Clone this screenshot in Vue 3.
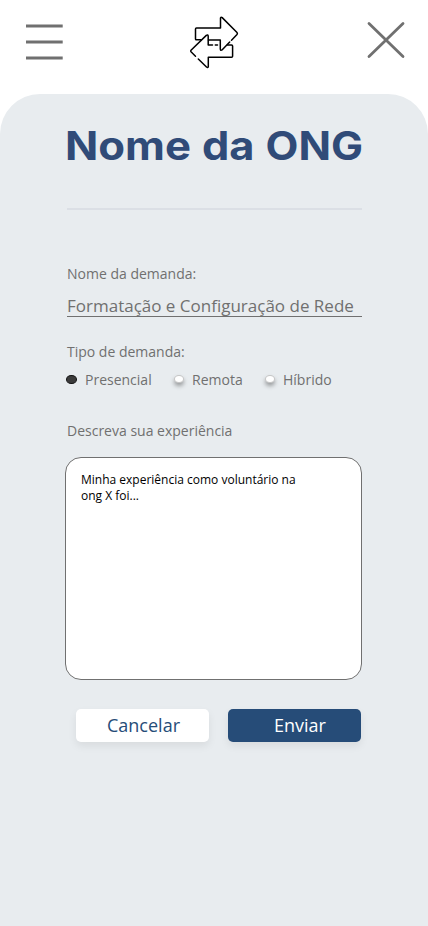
<script setup>
import { ref } from 'vue'

const types = ['Presencial', 'Remota', 'Híbrido']
const selected = ref('Presencial')
const demand = 'Formatação e Configuração de Rede'
</script>

<template>
  <div class="screen">
    <header class="topbar">
      <svg class="menu" width="38" height="36" viewBox="0 0 38 36">
        <path d="M0 2H36.700M0 18H36.700M0 34H36.700" />
      </svg>
      <svg class="logo" width="52" height="56" viewBox="188 14 52 56">
        <path d="M201 39.800H196.200Q195.500 39.800 195.500 39V29Q195.500 28 196.500 28H220.500V18Q221 16.500 222.200 17.600L237 32.500Q237.800 33.500 237 34.500L231.500 40.300M229.700 42L222 50Q220.500 51 220.300 49V40H208.500" />
        <path d="M227.500 45H231.500Q232.600 45 232.600 46V56.200Q232.600 57.200 231.500 57.200H208.300V66.500Q208 68.200 206.500 67L198.300 59M195.500 56.200L191 51.800Q190.300 51 191 50.200L206.300 35.400Q208 34.300 208.200 36V45H212.500M215.300 45H217.500" />
      </svg>
      <svg class="close" width="39" height="38" viewBox="0 0 39 38">
        <path d="M2 2.500L36 35.500M36 2.500L2 35.500" />
      </svg>
    </header>
    <main class="panel">
      <h1>
        <svg width="300" height="60" viewBox="0 0 300 60">
          <text x="0" y="44" textLength="126" lengthAdjust="spacingAndGlyphs">Nome</text>
          <text x="137" y="44" textLength="52.500" lengthAdjust="spacingAndGlyphs">da</text>
          <text x="200.500" y="44" textLength="97.500" lengthAdjust="spacingAndGlyphs">ONG</text>
        </svg>
      </h1>
      <hr />
      <p class="label name-label">Nome da demanda:</p>
      <div class="field">{{ demand }}</div>
      <p class="label type-label">Tipo de demanda:</p>
      <div class="types">
        <div v-for="t in types" :key="t" class="type" @click="selected = t">
          <i :class="{ on: selected === t }"></i><span>{{ t }}</span>
        </div>
      </div>
      <p class="label exp-label">Descreva sua experiência</p>
      <div class="box">Minha experiência como voluntário na<br />ong X foi...</div>
      <div class="actions">
        <button class="cancel">Cancelar</button>
        <button class="send">Enviar</button>
      </div>
    </main>
  </div>
</template>

<style>
body {
  margin: 0;
  background: #fff;
}
</style>

<style scoped>
.screen {
  width: 428px;
  height: 926px;
  display: flex;
  flex-direction: column;
  overflow: hidden;
  font-family: "Open Sans", sans-serif;
  color: #707070;
}
.topbar {
  height: 94px;
  flex: none;
  box-sizing: border-box;
  padding: 14px 22px 0 26px;
  display: flex;
  justify-content: space-between;
  align-items: flex-start;
}
svg {
  display: block;
  fill: none;
  overflow: visible;
}
.menu {
  margin-top: 10px;
  stroke: #707070;
  stroke-width: 3;
}
.logo {
  margin-right: 3px;
  stroke: #000;
  stroke-width: 1.5;
  stroke-linecap: round;
  stroke-linejoin: round;
}
.close {
  margin-top: 7px;
  stroke: #707070;
  stroke-width: 2.8;
  stroke-linecap: round;
}
.panel {
  flex: 1;
  background: #e8ecef;
  border-radius: 40px 40px 0 0;
  padding: 22px 66px 0 67px;
}
h1 {
  margin: 0 -5px 0 -2px;
}
h1 text {
  fill: #304b78;
  font: 700 39.5px Inter, sans-serif;
}
hr {
  border: 0;
  height: 2px;
  margin: 32px 0 0;
  background: #dbdfe5;
}
.label {
  margin: 0;
  font-size: 14px;
  line-height: 20px;
}
.name-label {
  margin-top: 54px;
}
.field {
  margin-top: 10px;
  height: 22px;
  line-height: 24px;
  font-size: 17px;
  white-space: nowrap;
  border-bottom: 1px solid #707070;
}
.type-label {
  margin-top: 25px;
}
.types {
  display: flex;
  margin-top: 8px;
  height: 20px;
  font-size: 14px;
  line-height: 20px;
}
.type {
  display: flex;
}
.type:nth-child(1) {
  width: 107px;
}
.type:nth-child(2) {
  width: 91px;
}
.type i {
  box-sizing: border-box;
  width: 10px;
  height: 8px;
  margin: 5px 8px 0 0;
  border-radius: 50%;
  background: #fff;
  border: 1px solid #c5c5c5;
  box-shadow: 0 3px 4px rgba(0, 0, 0, 0.35);
}
.type i.on {
  width: 11px;
  height: 9px;
  margin-left: -1px;
  background: #3b3b3b;
  border-color: #111;
  box-shadow: none;
}
.exp-label {
  margin-top: 31px;
}
.box {
  box-sizing: border-box;
  width: 297px;
  height: 223px;
  margin: 16px 0 0 -2px;
  padding: 14px 15px;
  border: 1px solid #707070;
  border-radius: 16px;
  background: #fff;
  color: #000;
  font-size: 12px;
  line-height: 16px;
}
.actions {
  display: flex;
  gap: 19px;
  margin: 29px 0 0 9px;
}
button {
  width: 133px;
  height: 33px;
  flex: none;
  padding: 0;
  border: 0;
  border-radius: 5px;
  font-family: inherit;
  font-size: 18px;
  line-height: 33px;
  box-shadow: 0 4px 8px rgba(0, 0, 0, 0.07);
}
.cancel {
  background: #fff;
  color: #264c78;
  padding-left: 2px;
}
.send {
  background: #264c78;
  color: #fff;
  padding-left: 11px;
}
</style>
